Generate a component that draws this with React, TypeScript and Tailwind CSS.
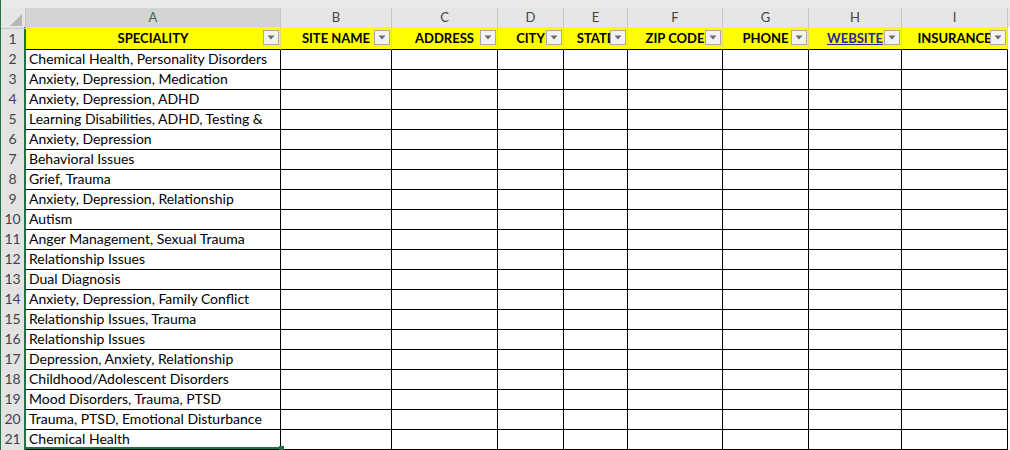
const GRID = "grid grid-cols-[25px_255px_111px_106px_66px_64px_95px_86px_93px_106px_1fr]";

const headers = [
  { col: "A", label: "SPECIALITY" },
  { col: "B", label: "SITE NAME" },
  { col: "C", label: "ADDRESS" },
  { col: "D", label: "CITY" },
  { col: "E", label: "STATE" },
  { col: "F", label: "ZIP CODE" },
  { col: "G", label: "PHONE" },
  { col: "H", label: "WEBSITE", link: true },
  { col: "I", label: "INSURANCE" },
];

const specialities = [
  "Chemical Health, Personality Disorders",
  "Anxiety, Depression, Medication",
  "Anxiety, Depression, ADHD",
  "Learning Disabilities, ADHD, Testing &",
  "Anxiety, Depression",
  "Behavioral Issues",
  "Grief, Trauma",
  "Anxiety, Depression, Relationship",
  "Autism",
  "Anger Management, Sexual Trauma",
  "Relationship Issues",
  "Dual Diagnosis",
  "Anxiety, Depression, Family Conflict",
  "Relationship Issues, Trauma",
  "Relationship Issues",
  "Depression, Anxiety, Relationship",
  "Childhood/Adolescent Disorders",
  "Mood Disorders, Trauma, PTSD",
  "Trauma, PTSD, Emotional Disturbance",
  "Chemical Health",
];

function FilterButton() {
  return (
    <div className="absolute right-[1px] top-[3px] flex h-[15px] w-[16px] items-center justify-center border border-[#a9a9a9] bg-[#f2f2f2]">
      <svg width="8" height="5" viewBox="0 0 8 5">
        <polygon points="0.5,0.5 7.5,0.5 4,4.5" fill="#6b6b6b" />
      </svg>
    </div>
  );
}

function RowNumber({ n }: { n: number }) {
  return (
    <div className="flex items-center justify-center border-r-2 border-b border-r-[#217346] border-b-[#c9c9c9] bg-[#e3e3e3] pt-px text-[14px] text-[#444]">
      {n}
    </div>
  );
}

export default function App() {
  return (
    <div className="flex h-[450px] w-[1010px] overflow-hidden bg-white font-['Lato',sans-serif] text-black">
      <div className="w-px shrink-0 bg-[#217346]" />
      <div className="flex min-w-0 flex-1 flex-col">
        <div className="h-[9px] bg-[#e9e9e9]" />

        {/* column letters */}
        <div className={`${GRID} h-[19px] bg-[#e6e6e6] text-[13px] text-[#444]`}>
          <div className="relative border-r border-b border-[#c6c6c6]">
            <svg className="absolute right-[3px] bottom-[2px]" width="12" height="12" viewBox="0 0 12 12">
              <polygon points="12,0 12,12 0,12" fill="#b7b7b7" />
            </svg>
          </div>
          {headers.map((h) =>
            h.col === "A" ? (
              <div key={h.col} className="flex items-center justify-center border-r border-b-2 border-r-[#c6c6c6] border-b-[#217346] bg-[#d4d4d4] text-[#3d6b50]">
                {h.col}
              </div>
            ) : (
              <div key={h.col} className="flex items-center justify-center border-r border-b border-r-[#c6c6c6] border-b-[#9e9e9e]">
                {h.col}
              </div>
            )
          )}
          <div className="border-b border-[#9e9e9e]" />
        </div>

        {/* header row */}
        <div className={`${GRID} h-[20px]`}>
          <RowNumber n={1} />
          {headers.map((h) => (
            <div key={h.col} className="relative flex items-center justify-center overflow-hidden whitespace-nowrap border-r border-b border-r-[#e0e070] border-b-black bg-[#ffff00] pt-[2px] text-[13px] font-bold">
              <span className={h.link ? "text-[#27279a] underline" : ""}>{h.label}</span>
              <FilterButton />
            </div>
          ))}
          <div className="bg-white" />
        </div>

        {/* data rows */}
        {specialities.map((s, i) => (
          <div key={i} className={`${GRID} h-[20px]`}>
            <RowNumber n={i + 2} />
            <div className="flex items-center overflow-hidden whitespace-nowrap border-r border-b border-black pl-[3px] pt-px text-[14px]">
              {s}
            </div>
            {headers.slice(1).map((h) => (
              <div key={h.col} className="border-r border-b border-black" />
            ))}
            <div />
          </div>
        ))}

        {/* partial row 22 */}
        <div className={`${GRID} h-[4px]`}>
          <div className="border-r-2 border-[#217346] bg-[#e3e3e3]" />
          <div className="relative border-t-2 border-[#217346]">
            <div className="absolute right-[-3px] top-[-3px] h-[5px] w-[5px] bg-[#217346]" />
          </div>
          {headers.slice(1).map((h) => (
            <div key={h.col} className="border-r border-black" />
          ))}
          <div />
        </div>
      </div>
    </div>
  );
}
